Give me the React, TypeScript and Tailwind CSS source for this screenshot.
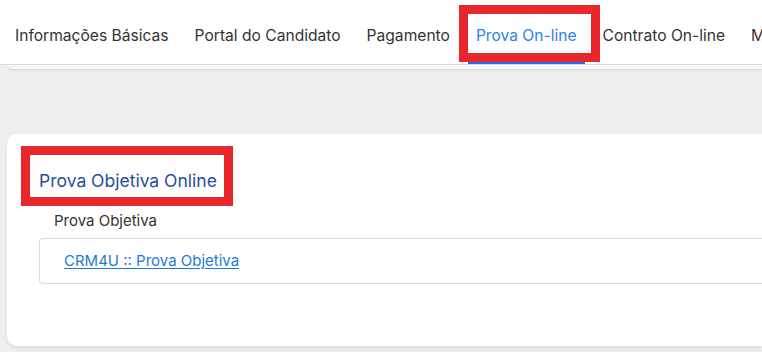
import React from 'react';

const tabs = [
  { label: 'Informações Básicas' },
  { label: 'Portal do Candidato' },
  { label: 'Pagamento' },
  { label: 'Prova On-line', active: true },
  { label: 'Contrato On-line' },
  { label: 'Meus Documentos' },
];

export default function App() {
  return (
    <div className="w-[762px] h-[352px] overflow-hidden bg-[#eeeff1] font-['Inter',sans-serif] text-[#333]">
      {/* tab bar */}
      <nav className="h-[65px] bg-white border-b border-[#dcdcdc] flex items-stretch pl-[2px] whitespace-nowrap">
        {tabs.map((t, i) => (
          <div key={i} className="relative flex items-stretch shrink-0">
            <div
              className={
                'flex items-center pt-[9px] px-2 mx-[5px] text-[15.6px] border-b-2 ' +
                (t.active ? 'text-[#2f80ed] border-[#1a6ef0]' : 'border-transparent')
              }
            >
              {t.label}
            </div>
            {t.active && (
              <div className="absolute left-[-4px] right-[-10px] top-[5px] bottom-[2px] border-[9px] border-[#e8262b] pointer-events-none" />
            )}
          </div>
        ))}
      </nav>
      <div className="ml-2 h-1 bg-[#f7f7f7] rounded-bl-lg shadow-sm" />

      {/* card */}
      <div className="mt-[65px] ml-[7px] h-[212px] bg-white rounded-l-[10px] shadow-[0_2px_4px_rgba(0,0,0,0.08)] pt-[12px] pl-[14px]">
        <div className="inline-block border-[9px] border-[#e8262b] pl-[9px] pr-[7px] pt-[14px] pb-[5px]">
          <h2 className="text-[17.5px] leading-[23px] text-[#1f4e9c]">Prova Objetiva Online</h2>
        </div>
        <div className="pl-[18px] pr-0">
          <div className="pl-[15px] pt-[5px] text-[15px] leading-[20px]">Prova Objetiva</div>
          <div className="mt-[7px] h-[46px] border border-[#d9d9d9] rounded-l-[4px] border-r-0 flex items-center pl-[24px]">
            <a href="#" className="text-[15px] text-[#1f7ad6] underline underline-offset-2">
              CRM4U :: Prova Objetiva
            </a>
          </div>
        </div>
      </div>
    </div>
  );
}
